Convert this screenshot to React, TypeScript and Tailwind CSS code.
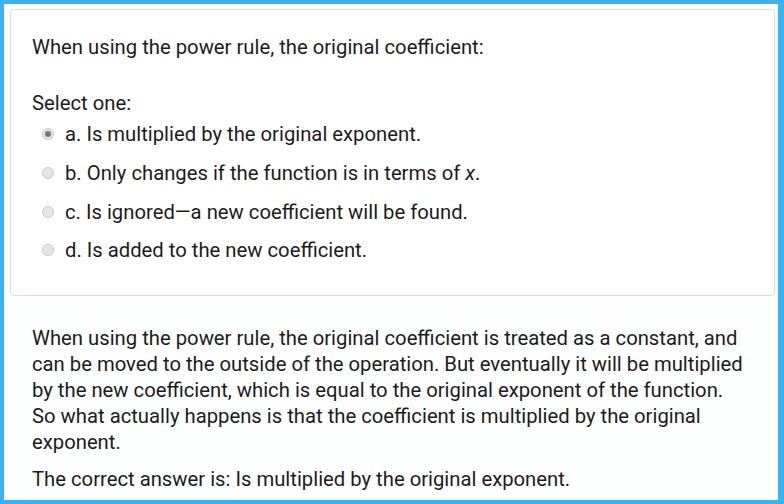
export default function App() {
  const options = [
    { key: "a", text: <>a. Is multiplied by the original exponent.</>, checked: true },
    { key: "b", text: <>b. Only changes if the function is in terms of <i>x</i>.</>, checked: false },
    { key: "c", text: <>c. Is ignored—a new coefficient will be found.</>, checked: false },
    { key: "d", text: <>d. Is added to the new coefficient.</>, checked: false },
  ];

  return (
    <div
      className="h-[504px] w-[784px] overflow-hidden border-[4px] border-r-[6px] border-[#3cb3ee] bg-[#fdfefe] text-[20.25px] text-[#1c1c1c]"
      style={{ fontFamily: "Roboto, 'Noto Sans', sans-serif" }}
    >
      <div className="ml-[6px] mr-[3px] mt-[5px] h-[287px] rounded-[4px] border border-[#cfe2e4] bg-white px-[21px] pt-[24px]">
        <p className="leading-[26px]">When using the power rule, the original coefficient:</p>
        <p className="mt-[30px] leading-[26px]">Select one:</p>
        <div className="mt-[-1px] flex flex-col">
          {options.map((o) => (
            <label key={o.key} className="flex h-[38.67px] items-center">
              <span className="ml-[10px] mr-[11px] flex h-[12px] w-[12px] items-center justify-center rounded-full border border-[#c9c9c9] bg-[#e6e6e6]">
                {o.checked && <span className="h-[6px] w-[6px] rounded-full bg-[#777]" />}
              </span>
              <span className="leading-[26px]">{o.text}</span>
            </label>
          ))}
        </div>
      </div>
      <div className="px-[28px] pt-[29px]">
        <p className="leading-[26px]">
          When using the power rule, the original coefficient is treated as a constant, and can be moved to the
          outside of the operation. But eventually it will be multiplied by the new coefficient, which is equal to
          the original exponent of the function. So what actually happens is that the coefficient is multiplied by
          the original exponent.
        </p>
        <p className="mt-[11px] leading-[26px]">The correct answer is: Is multiplied by the original exponent.</p>
      </div>
    </div>
  );
}
